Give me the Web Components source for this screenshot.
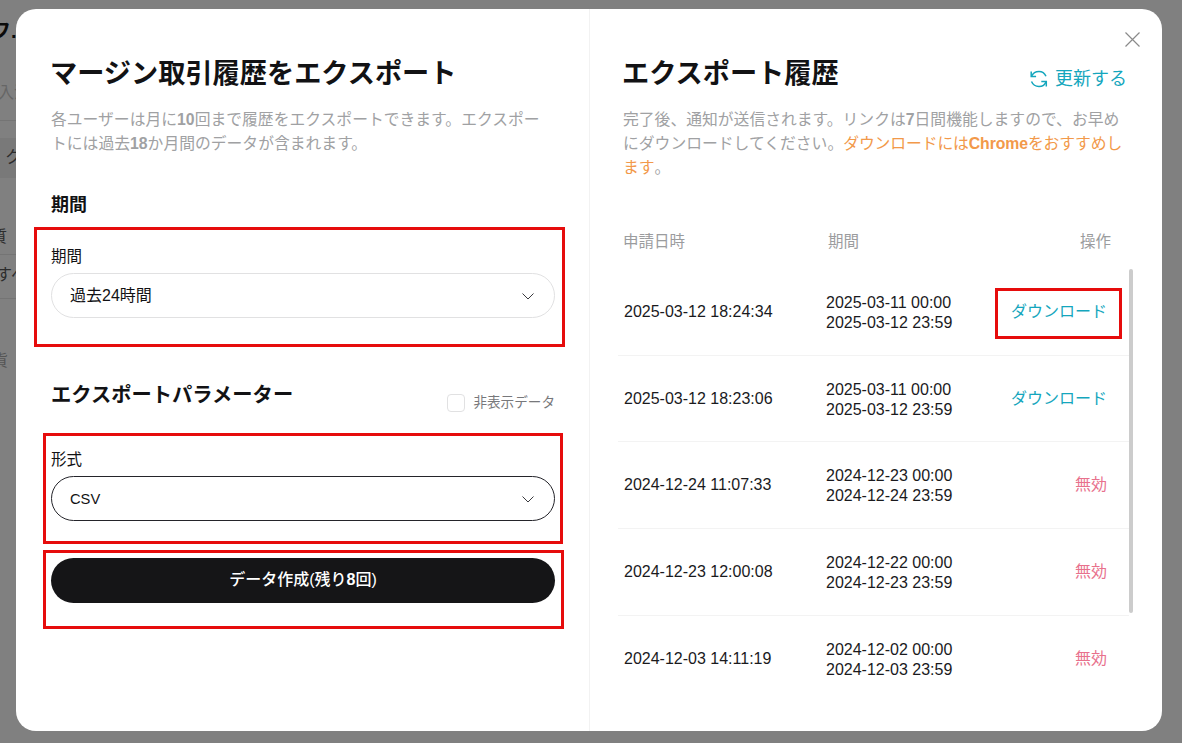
<!DOCTYPE html>
<html lang="ja">
<head>
<meta charset="utf-8">
<title>エクスポート</title>
<style>
  html, body { margin: 0; height: 743px; overflow: hidden; }
  body {
    background: #808080;
    color: #121214;
    font-family: "Liberation Sans", "Noto Sans CJK JP", sans-serif;
  }
</style>
</head>
<body>
<page-behind></page-behind>
<export-modal>
  <export-form slot="left"></export-form>
  <export-history slot="right"></export-history>
</export-modal>

<script>
class PageBehind extends HTMLElement {
  constructor() {
    super();
    this.attachShadow({ mode: "open" });
    this.shadowRoot.innerHTML = `
      <style>
        :host { position: absolute; left: 0; top: 0; width: 16px; height: 743px; overflow: hidden; color: #0b0b0b; font-size: 16px; }
        .bit { position: absolute; left: 0; white-space: nowrap; line-height: 20px; }
        .line { position: absolute; left: 0; width: 16px; height: 1px; background: #747474; }
        .band { position: absolute; left: 0; width: 16px; height: 40px; top: 138px; background: #797979; }
      </style>
      <div class="bit" style="top:21px;font-weight:700;font-size:20px;left:-9px">フ.</div>
      <div class="bit" style="top:83px;left:-2px;color:#666;font-size:16px">入注</div>
      <div class="line" style="top:120px"></div>
      <div class="band"></div>
      <div class="bit" style="top:148px;left:5px;color:#2c2c2c;font-size:17px">ク</div>
      <div class="bit" style="top:227px;left:-9px;color:#2c2c2c;font-size:16px">質</div>
      <div class="line" style="top:254px"></div>
      <div class="bit" style="top:265px;left:-4px;color:#2c2c2c;font-size:16px">すへ</div>
      <div class="line" style="top:298px"></div>
      <div class="bit" style="top:351px;left:-8px;color:#555;font-size:16px">貨</div>
    `;
  }
}

class ExportModal extends HTMLElement {
  constructor() {
    super();
    this.attachShadow({ mode: "open" });
    this.shadowRoot.innerHTML = `
      <style>
        :host {
          position: absolute; left: 16px; top: 9px;
          width: 1146px; height: 722px;
          background: #fff; border-radius: 20px;
          display: flex; overflow: hidden;
        }
        .left { width: 573px; border-right: 1px solid #f2f2f2; }
        .right { flex: 1; min-width: 0; }
        button {
          position: absolute; right: 22px; top: 23px;
          width: 15px; height: 15px; padding: 0;
          border: none; background: none; display: block; cursor: pointer;
        }
      </style>
      <div class="left"><slot name="left"></slot></div>
      <div class="right"><slot name="right"></slot></div>
      <button aria-label="閉じる">
        <svg width="15" height="15" viewBox="0 0 15 15" fill="none" stroke="#8a8a8a" stroke-width="1.2">
          <path d="M.5.5l14 14M14.5.5l-14 14"/>
        </svg>
      </button>
    `;
  }
}

class SelectField extends HTMLElement {
  constructor() {
    super();
    this.attachShadow({ mode: "open" });
    this.shadowRoot.innerHTML = `
      <style>
        :host { display: block; }
        label { display: block; font-size: 15.5px; line-height: 20px; margin-bottom: 6px; color: #121214; }
        .box {
          height: 45px; box-sizing: border-box;
          border: 1px solid #e1e1e2; border-radius: 23px;
          display: flex; align-items: center; justify-content: space-between;
          padding: 0 19px 0 18px;
          font-size: 16px; color: #121214;
        }
        .box span { padding-bottom: 3px; }
        :host([active]) .box { border-color: #24242a; font-size: 14.7px; }
        :host([active]) .box span { padding-bottom: 0; }
        svg { display: block; }
      </style>
      <label></label>
      <div class="box">
        <span><slot></slot></span>
        <svg width="14" height="14" viewBox="0 0 14 14" fill="none" stroke="#3a3a3e" stroke-width="1">
          <path d="M1.5 4.5L7 10l5.5-5.5"/>
        </svg>
      </div>
    `;
    this.shadowRoot.querySelector("label").textContent = this.getAttribute("label");
  }
}

class RedMark extends HTMLElement {
  constructor() {
    super();
    this.attachShadow({ mode: "open" });
    this.shadowRoot.innerHTML = `
      <style>
        :host { position: absolute; box-sizing: border-box; border: 3px solid #e60c0c; pointer-events: none; }
      </style>
    `;
  }
}

class ExportForm extends HTMLElement {
  constructor() {
    super();
    this.attachShadow({ mode: "open" });
    this.shadowRoot.innerHTML = `
      <style>
        :host { display: block; padding: 43px 34px 0 35px; }
        h1 { margin: 0 0 0 -1px; font-size: 27.2px; line-height: 44px; font-weight: 700; color: #121214; }
        p { margin: 12px 0 0; font-size: 15.8px; line-height: 24px; color: #a0a1a3; white-space: nowrap; }
        b { font-weight: 700; }
        h2 { margin: 0; font-size: 18px; line-height: 26px; font-weight: 700; color: #121214; }
        .period-title { margin-top: 36px; }
        select-field.period { margin-top: 29px; }
        .params {
          display: flex; justify-content: space-between; align-items: flex-start;
          margin-top: 63px; height: 42px;
        }
        .params h2 { font-size: 20.3px; line-height: 28px; }
        .hidden {
          display: flex; align-items: center; gap: 8px;
          font-size: 13.6px; color: #77787b; margin-top: 12px; line-height: 20px;
        }
        .check { width: 18px; height: 18px; box-sizing: border-box; border: 1px solid #e1e1e2; border-radius: 4px; }
        select-field.format { margin-top: 27px; }
        button {
          display: block; width: 100%; height: 45px; margin-top: 37px;
          border: none; border-radius: 23px; padding: 0 0 5px;
          background: #151517; color: #fff;
          font: 500 16px "Liberation Sans", "Noto Sans CJK JP", sans-serif;
        }
      </style>
      <h1>マージン取引履歴をエクスポート</h1>
      <p>各ユーザーは月に<b>10</b>回まで履歴をエクスポートできます。エクスポー<br>トには過去<b>18</b>か月間のデータが含まれます。</p>
      <h2 class="period-title">期間</h2>
      <select-field class="period" label="期間">過去24時間</select-field>
      <div class="params">
        <h2>エクスポートパラメーター</h2>
        <div class="hidden"><span class="check"></span>非表示データ</div>
      </div>
      <select-field class="format" label="形式" active>CSV</select-field>
      <button>データ作成(残り<b>8</b>回)</button>
    `;
  }
}

const HISTORY = [
  ["2025-03-12 18:24:34", "2025-03-11 00:00", "2025-03-12 23:59", true],
  ["2025-03-12 18:23:06", "2025-03-11 00:00", "2025-03-12 23:59", true],
  ["2024-12-24 11:07:33", "2024-12-23 00:00", "2024-12-24 23:59", false],
  ["2024-12-23 12:00:08", "2024-12-22 00:00", "2024-12-23 23:59", false],
  ["2024-12-03 14:11:19", "2024-12-02 00:00", "2024-12-03 23:59", false],
];

class ExportHistory extends HTMLElement {
  constructor() {
    super();
    this.attachShadow({ mode: "open" });
    const rows = HISTORY.map(([date, from, to, ok]) => `
      <div class="row">
        <div class="date">${date}</div>
        <div class="range">${from}<br>${to}</div>
        <div class="op ${ok ? "ok" : "bad"}">${ok ? "ダウンロード" : "無効"}</div>
      </div>`).join("");
    this.shadowRoot.innerHTML = `
      <style>
        :host { display: block; padding: 43px 0 0 33px; position: relative; }
        .head { display: flex; justify-content: space-between; align-items: flex-start; padding-right: 35px; }
        h1 { margin: 0 0 0 -1px; font-size: 27.2px; line-height: 44px; font-weight: 700; color: #121214; }
        .refresh {
          display: flex; align-items: center; gap: 7px;
          color: #14a6bd; font-size: 18px; line-height: 24px; margin-top: 15px;
        }
        .refresh svg { display: block; }
        p { margin: 12px 38px 0 0; font-size: 15.8px; line-height: 24px; color: #a0a1a3; white-space: nowrap; }
        p em { font-style: normal; color: #f2994a; letter-spacing: -0.1px; }
        p b { font-weight: 700; }
        .cols { display: grid; grid-template-columns: 205px 150px 1fr; }
        .row { display: grid; grid-template-columns: 202px 150px 1fr; }
        .cols {
          margin-top: 52px; font-size: 15.5px; line-height: 20px; color: #9b9c9e;
          padding-right: 51px;
        }
        .cols div:last-child { text-align: right; }
        .list {
          margin: 17px 0 0 -5px; width: 511px; height: 440px; overflow: hidden;
        }
        .row {
          height: 86.7px; align-items: center; border-bottom: 1px solid #f3f3f3;
          padding-left: 6px; font-size: 16px; color: #1a1a1d;
          box-sizing: border-box;
        }
        .row:last-child { border-bottom: none; }
        .range { line-height: 20px; padding-top: 2px; }
        .op { text-align: right; padding: 0 22px 4px 0; font-size: 16px; }
        .ok { color: #14a6bd; }
        .bad { color: #e8718c; }
        .bar {
          position: absolute; left: 539px; top: 260px;
          width: 4px; height: 344px; border-radius: 2px; background: #cccccc;
        }
      </style>
      <div class="head">
        <h1>エクスポート履歴</h1>
        <div class="refresh">
          <svg width="18" height="18" viewBox="0 0 18 18" fill="none" stroke="#14a6bd" stroke-width="1.5">
            <path d="M1.5 6.2C3 3 5.8 1.5 9 1.5c3 0 5.6 1.6 7 4.7"/>
            <path d="M1.2 1.5v4.9h4.9"/>
            <path d="M1.5 11.5c1.4 3.2 4.4 5 7.5 5s6-1.7 7-4.7"/>
            <path d="M16.3 16.5v-5h-5"/>
          </svg>
          更新する
        </div>
      </div>
      <p>完了後、通知が送信されます。リンクは<b>7</b>日間機能しますので、お早め<br>にダウンロードしてください。<em>ダウンロードには<b>Chrome</b>をおすすめし<br>ます</em>。</p>
      <div class="cols"><div>申請日時</div><div>期間</div><div>操作</div></div>
      <div class="list">${rows}</div>
      <div class="bar"></div>
    `;
  }
}

customElements.define("page-behind", PageBehind);
customElements.define("select-field", SelectField);
customElements.define("red-mark", RedMark);
customElements.define("export-form", ExportForm);
customElements.define("export-history", ExportHistory);
customElements.define("export-modal", ExportModal);

// red review boxes sit over the finished page
[[34, 227, 531, 120], [43, 433, 520, 111], [43, 550, 521, 79], [995, 288, 127, 51]].forEach(([x, y, w, h]) => {
  const mark = document.createElement("red-mark");
  mark.style.cssText = `left:${x}px;top:${y}px;width:${w}px;height:${h}px`;
  document.body.appendChild(mark);
});
</script>
</body>
</html>
